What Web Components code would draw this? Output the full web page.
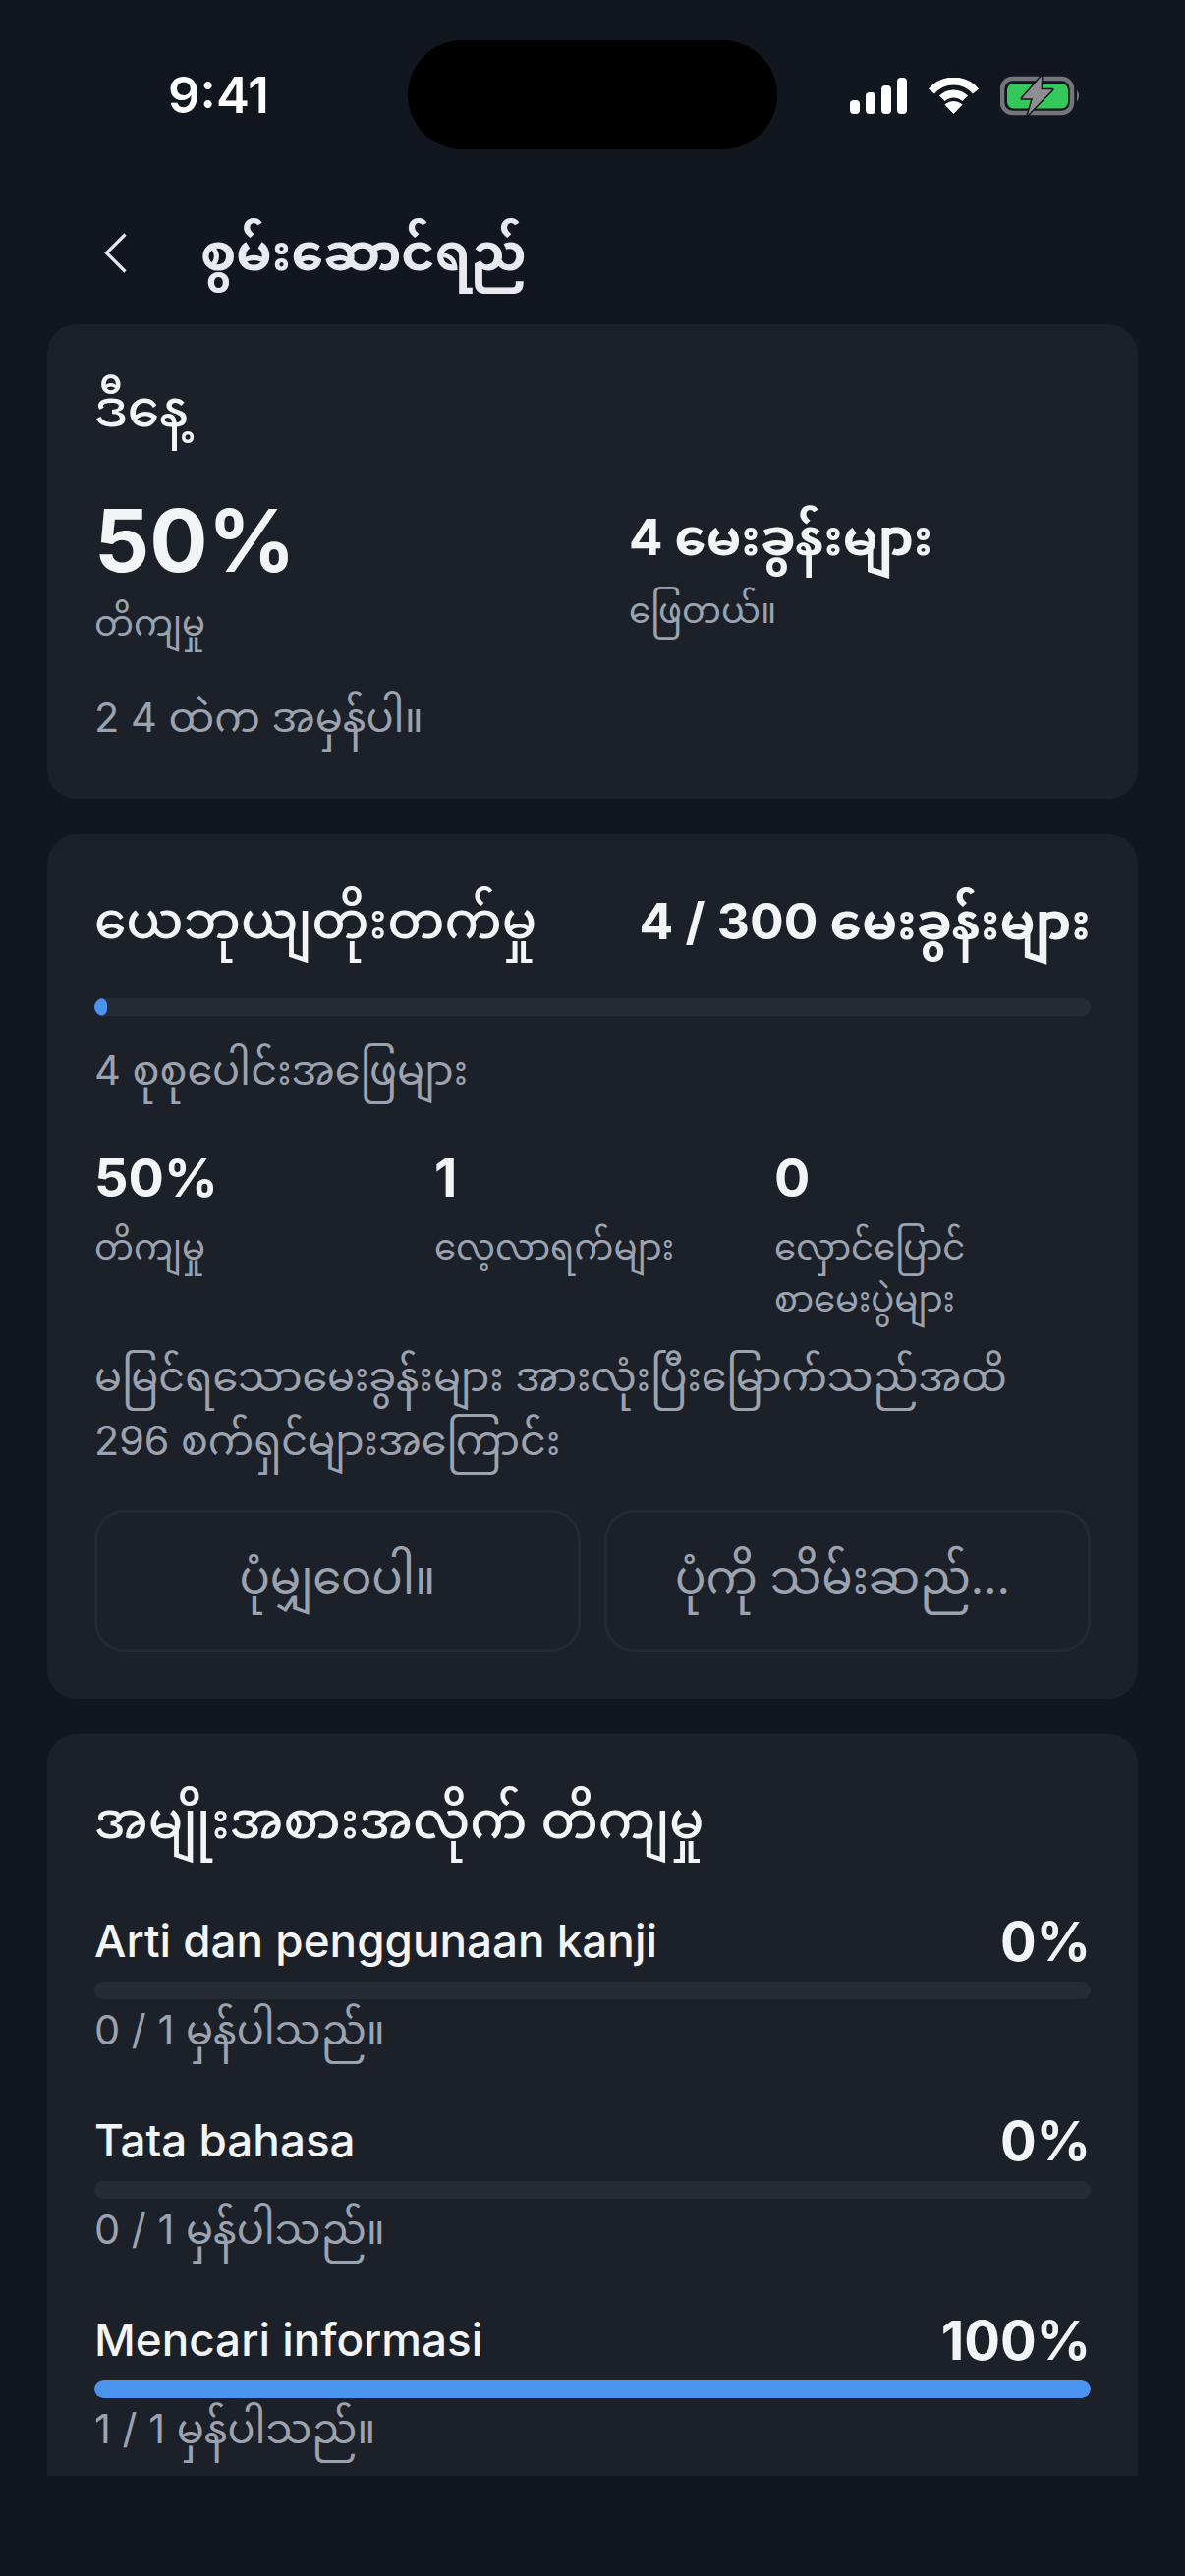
<!DOCTYPE html>
<html lang="my">
<head>
<meta charset="utf-8">
<style>
  html,body{margin:0;padding:0;background:#12161e;}
  body{width:1206px;height:2622px;overflow:hidden;font-family:Inter,"Noto Sans Myanmar","Myanmar MN","Padauk","Noto Sans","DejaVu Sans",sans-serif;color:#f3f4f6;}
  app-page{display:block}
</style>
</head>
<body>
<app-page>
  <status-bar slot="top"></status-bar>
  <nav-header>စွမ်းဆောင်ရည်</nav-header>
  <scroll-area>
    <info-card style="--pb:53px">
      <card-heading style="--lh:76px">ဒီနေ့</card-heading>
      <today-summary>
        <span slot="big">50%</span><span slot="bigl">တိကျမှု</span>
        <span slot="val">4 မေးခွန်းများ</span><span slot="vall">ဖြေတယ်။</span>
        <span slot="foot">2 4 ထဲက အမှန်ပါ။</span>
      </today-summary>
    </info-card>
    <info-card>
      <overall-progress></overall-progress>
    </info-card>
    <info-card>
      <card-heading style="--lh:80px">အမျိုးအစားအလိုက် တိကျမှု</card-heading>
      <category-row style="--mt:53px" name="Arti dan penggunaan kanji" pct="0" sub="0 / 1 မှန်ပါသည်။"></category-row>
      <category-row style="--mt:52px" name="Tata bahasa" pct="0" sub="0 / 1 မှန်ပါသည်။"></category-row>
      <category-row style="--mt:52px" name="Mencari informasi" pct="100" sub="1 / 1 မှန်ပါသည်။"></category-row>
    </info-card>
  </scroll-area>
</app-page>
<script>
const FONT = 'Inter,"Noto Sans Myanmar","Myanmar MN","Padauk","Noto Sans","DejaVu Sans",sans-serif';
function def(name, html, extra){
  const t=document.createElement('template'); t.innerHTML=html;
  customElements.define(name, class extends HTMLElement{
    constructor(){super();this.attachShadow({mode:'open'}).appendChild(t.content.cloneNode(true));}
    connectedCallback(){ if(extra) extra(this); }
  });
}
def('app-page',`<style>:host{display:block;width:1206px;height:2622px}</style><slot name="top"></slot><slot></slot>`);
def('status-bar',`<style>
:host{display:grid;grid-template-columns:415px 376px 1fr;height:111px;padding-top:41px;align-items:center;font-family:${FONT}}
.t{padding-left:171px;font-size:51px;font-weight:600;color:#fff;letter-spacing:0}
.i{height:111px;background:#000;border-radius:56px}
.r{display:flex;align-items:center;padding:2px 0 0 74px}
svg{display:block;flex:none}
</style>
<div class="t">9:41</div><div class="i"></div>
<div class="r">
<svg width="58" height="37" viewBox="0 0 58 37"><rect x="0" y="23" width="10" height="14" rx="4" fill="#fff"/><rect x="16" y="15" width="10" height="22" rx="4" fill="#fff"/><rect x="32" y="8" width="10" height="29" rx="4" fill="#fff"/><rect x="48" y="0" width="10" height="37" rx="4" fill="#fff"/></svg>
<svg style="margin-left:22px" width="51" height="37" viewBox="0 0 51 37"><g fill="none" stroke="#fff" stroke-width="8"><path d="M3 14A29.5 29.5 0 0 1 48 14"/><path d="M13.800 21.300A16.500 16.500 0 0 1 37.200 21.300"/></g><path d="M25.500 36.500 17 27.500Q25.500 21.500 34 27.500Z" fill="#fff" stroke="#fff" stroke-linejoin="round"/></svg>
<svg style="margin-left:22px" width="82" height="43" viewBox="0 0 82 43"><rect x="2" y="4" width="71" height="35" rx="10.500" fill="none" stroke="#747579" stroke-width="4.500"/><rect x="7" y="9" width="62" height="25.500" rx="6.500" fill="#34c759"/><path d="M78 15.500Q82 21.500 78 27.500Z" fill="#747579"/><path d="M42 1.500 22 24.300H33L28 41 53 15.300H41.500Z" fill="#8e8e93" stroke="#12161e" stroke-width="3" paint-order="stroke" stroke-linejoin="round"/></svg>
</div>`);
def('nav-header',`<style>
:host{display:flex;align-items:center;height:146px;padding-top:32px;font-family:${FONT}}
svg{margin-left:106px;flex:none}
div{margin-left:75px;font-size:52px;font-weight:700;line-height:100px;color:#e8eaf0}
</style>
<svg width="23" height="41" viewBox="0 0 23 41"><path d="M21.500 1.500 2.500 20.500 21.500 39.500" fill="none" stroke="#e5e7eb" stroke-width="3.200"/></svg><div><slot></slot></div>`);
def('scroll-area',`<style>
:host{display:flex;flex-direction:column;gap:36px;height:2190px;padding:0 48px;overflow:hidden}
</style><slot></slot>`);
def('info-card',`<style>
:host{display:block;flex:none;background:#1c2129;border-radius:30px;padding:48px 48px var(--pb,48px)}
</style><slot></slot>`);
def('card-heading',`<style>
:host{display:block;font-size:52px;font-weight:500;line-height:var(--lh,80px);color:#f3f4f6}
</style><slot></slot>`);
def('today-summary',`<style>
:host{display:block}
.g{display:grid;grid-template-columns:470px 1fr;column-gap:74px;margin-top:49px}
.big{font-size:88px;font-weight:700;line-height:94px;color:#f3f4f6}
.l{font-size:35.500px;line-height:60px;color:#9ca3af}
.v{font-size:51px;font-weight:700;line-height:80px;margin-top:4px;color:#f3f4f6}
.f{font-size:41.500px;line-height:60px;color:#9ca3af;margin-top:35px}
</style>
<div class="g"><div><div class="big"><slot name="big"></slot></div><div class="l" style="margin-top:8px"><slot name="bigl"></slot></div></div>
<div><div class="v"><slot name="val"></slot></div><div class="l" style="margin-top:5px"><slot name="vall"></slot></div></div></div>
<div class="f"><slot name="foot"></slot></div>`);
def('progress-track',`<style>
:host{display:block;height:18px;border-radius:9px;background:#262b35;overflow:hidden}
i{display:block;height:100%;border-radius:9px;background:#4a94f0;width:var(--v,0%)}
</style><i></i>`);
def('stat-item',`<style>
:host{display:block}
.n{font-size:54px;font-weight:700;line-height:60px;color:#f3f4f6}
.l{font-size:35.500px;line-height:53px;margin-top:14px;color:#9ca3af}
</style><div class="n"></div><div class="l"><slot></slot></div>`,el=>{el.shadowRoot.querySelector('.n').textContent=el.getAttribute('n')});
def('ghost-button',`<style>
:host{display:flex;align-items:center;justify-content:center;height:135px;padding-top:3px;border:3px solid #242932;border-radius:30px;font-size:46.500px;color:#9ca3af}
</style><slot></slot>`);
def('overall-progress',`<style>
:host{display:block}
.h{display:flex;justify-content:space-between;align-items:center;line-height:80px}
.a{font-size:52px;font-weight:500;color:#f3f4f6}
.b{font-size:51.500px;font-weight:700;color:#f3f4f6}
progress-track{margin-top:39px}
.s{font-size:41.500px;line-height:60px;margin-top:25px;color:#9ca3af}
.st{display:grid;grid-template-columns:repeat(3,1fr);column-gap:24px;margin-top:50px}
.p{font-size:41.300px;line-height:65px;margin-top:20px;color:#9ca3af}
.bt{display:grid;grid-template-columns:1fr 1fr;column-gap:24px;margin-top:38px}
</style>
<div class="h"><div class="a">ယေဘုယျတိုးတက်မှု</div><div class="b">4 / 300 မေးခွန်းများ</div></div>
<progress-track style="--v:1.330%"></progress-track>
<div class="s">4 စုစုပေါင်းအဖြေများ</div>
<div class="st"><stat-item n="50%">တိကျမှု</stat-item><stat-item n="1">လေ့လာရက်များ</stat-item><stat-item n="0">လှောင်ပြောင်<br>စာမေးပွဲများ</stat-item></div>
<div class="p">မမြင်ရသောမေးခွန်းများ အားလုံးပြီးမြောက်သည်အထိ<br>296 စက်ရှင်များအကြောင်း</div>
<div class="bt"><ghost-button>ပုံမျှဝေပါ။</ghost-button><ghost-button style="padding-right:10px">ပုံကို သိမ်းဆည်…</ghost-button></div>`);
def('category-row',`<style>
:host{display:block;margin-top:var(--mt,0)}
.h{display:flex;justify-content:space-between;line-height:60px}
.n{font-size:45.800px;font-weight:500;color:#f3f4f6}
.v{font-size:54.500px;font-weight:700;color:#f3f4f6}
progress-track{margin-top:11px}
.s{font-size:41.500px;line-height:62px;color:#9ca3af}
</style><div class="h"><div class="n"></div><div class="v"></div></div><progress-track></progress-track><div class="s"></div>`,el=>{
  const s=el.shadowRoot,p=el.getAttribute('pct');
  s.querySelector('.n').textContent=el.getAttribute('name');
  s.querySelector('.v').textContent=p+'%';
  s.querySelector('.s').textContent=el.getAttribute('sub');
  s.querySelector('progress-track').style.setProperty('--v',p+'%');
});
</script>
</body>
</html>
